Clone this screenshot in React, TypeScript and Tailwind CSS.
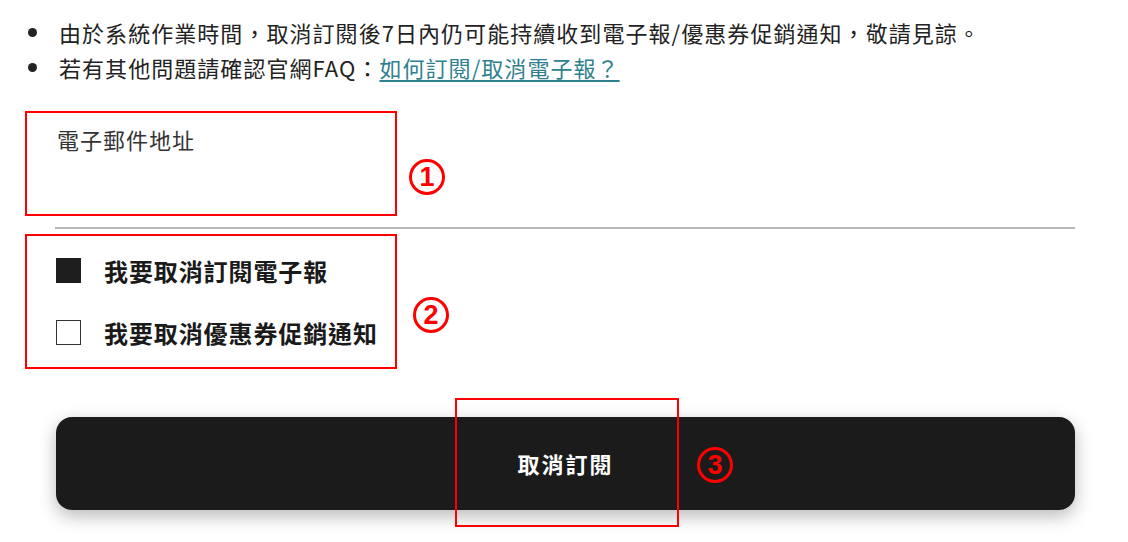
import React from "react";

const Circ = ({ n, className }: { n: string; className?: string }) => (
  <div
    className={
      "flex items-center justify-center w-[36px] h-[36px] rounded-full border-[3.5px] border-[#ff0000] text-[#ff0000] text-[27px] font-bold leading-none " +
      (className || "")
    }
    style={{ fontFamily: '"Liberation Sans", Arial, sans-serif' }}
  >
    {n}
  </div>
);

export default function App() {
  return (
    <div
      className="relative w-[1128px] h-[542px] bg-white overflow-hidden text-[#222]"
      style={{ fontFamily: '"Noto Sans CJK TC", "Noto Sans", sans-serif' }}
    >
      <div className="pt-[15px] pl-[28px] text-[22px] tracking-[1.05px]">
        <div className="flex items-center h-[35px]">
          <span className="w-[9px] h-[9px] rounded-full bg-[#222] shrink-0" />
          <span className="ml-[22px] whitespace-nowrap">
            由於系統作業時間，取消訂閱後7日內仍可能持續收到電子報/優惠券促銷通知，敬請見諒。
          </span>
        </div>
        <div className="flex items-center h-[35px]">
          <span className="w-[9px] h-[9px] rounded-full bg-[#222] shrink-0" />
          <span className="ml-[22px] whitespace-nowrap">
            若有其他問題請確認官網FAQ：
            <a className="text-[#2f7f8e] underline underline-offset-[3px]">如何訂閱/取消電子報？</a>
          </span>
        </div>
      </div>

      <div className="pl-[25px] mt-[26px] flex items-start">
        <div className="w-[372px] h-[105px] border-2 border-[#ff0000] pl-[30px] pt-[10px]">
          <div className="text-[22px] text-[#333] tracking-[1px]">電子郵件地址</div>
        </div>
        <Circ n="1" className="ml-[12px] mt-[48px]" />
      </div>

      <div className="ml-[55px] mt-[11px] w-[1020px] h-[2px] bg-[#b8b8b8]" />

      <div className="pl-[25px] mt-[5px] flex items-start">
        <div className="w-[372px] h-[135px] border-2 border-[#ff0000] pl-[29px] pt-[22px] flex flex-col gap-[37px]">
          <div className="flex items-center h-[25px]">
            <span className="w-[25px] h-[25px] bg-[#1e1e1e] shrink-0" />
            <span className="ml-[23px] text-[24px] font-bold tracking-[0.9px] text-[#1a1a1a] whitespace-nowrap">
              我要取消訂閱電子報
            </span>
          </div>
          <div className="flex items-center h-[25px]">
            <span className="w-[25px] h-[25px] border-[1.5px] border-[#333] bg-white shrink-0" />
            <span className="ml-[23px] text-[24px] font-bold tracking-[0.9px] text-[#1a1a1a] whitespace-nowrap">
              我要取消優惠券促銷通知
            </span>
          </div>
        </div>
        <Circ n="2" className="ml-[16px] mt-[63px]" />
      </div>

      <div className="relative ml-[56px] mt-[48px] w-[1019px]">
        <div className="h-[93px] rounded-[16px] bg-[#1b1b1b] shadow-[0_6px_18px_rgba(0,0,0,0.28)] flex items-center justify-center">
          <span className="text-white text-[22px] font-bold tracking-[2px]">取消訂閱</span>
        </div>
        <div className="absolute left-[399px] top-[-19px] w-[224px] h-[129px] border-2 border-[#ff0000]" />
        <Circ n="3" className="absolute left-[641px] top-[30px]" />
      </div>
    </div>
  );
}
